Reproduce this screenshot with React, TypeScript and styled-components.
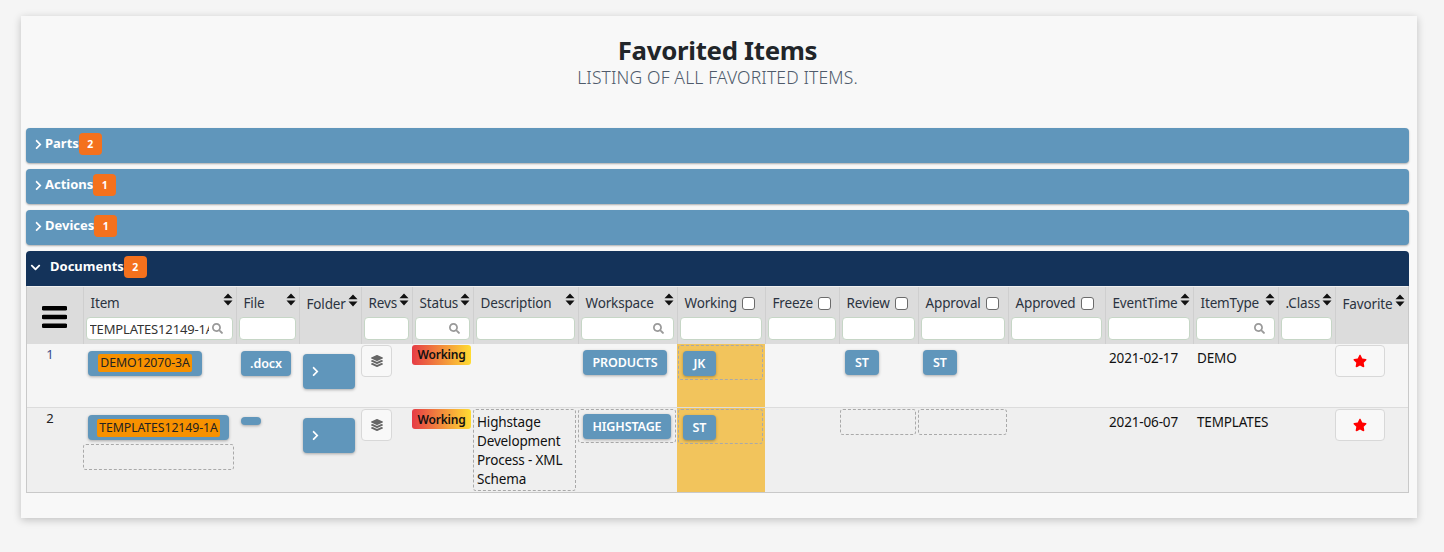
import React from 'react';
import styled, { createGlobalStyle } from 'styled-components';
import { FaStar, FaLayerGroup, FaSearch, FaChevronRight, FaChevronDown } from 'react-icons/fa';

const Global = createGlobalStyle`
  html, body { margin: 0; padding: 0; background: #f5f5f5; }
  body { font-family: "Noto Sans", "Open Sans", sans-serif; color: #212529; }
`;
const Page = styled.div`
  padding: 16px 27px 34px 21px;
  height: 552px;
  box-sizing: border-box;
`;
const Card = styled.div`
  background: #f8f8f8;
  height: 502px;
  box-sizing: border-box;
  padding: 19px 8px 0 5px;
  box-shadow: 0 2px 8px rgba(0,0,0,.22);
`;
const Title = styled.h1`
  margin: 0;
  text-align: center;
  font-size: 25.8px;
  line-height: 31px;
  font-weight: 700;
  color: #212529;
  letter-spacing: -0.3px;
`;
const Subtitle = styled.div`
  text-align: center;
  font-size: 17.5px;
  line-height: 22px;
  font-weight: 300;
  color: #4f5b6b;
  letter-spacing: 0.15px;
  margin-bottom: 40px;
`;
const Panel = styled.div<{ $open?: boolean }>`
  height: 35px;
  display: flex;
  align-items: center;
  box-sizing: border-box;
  padding-bottom: 3px;
  color: #fff;
  font-size: 13px;
  font-weight: 700;
  background: ${p => (p.$open ? '#14335a' : '#6096bb')};
  border-radius: ${p => (p.$open ? '4px 4px 0 0' : '4px')};
  box-shadow: ${p => (p.$open ? 'none' : '0 1px 2px rgba(0,0,0,.3)')};
  padding-left: ${p => (p.$open ? '4px' : '7px')};
  margin-bottom: ${p => (p.$open ? '0' : '6px')};
`;
const PanelLabel = styled.span<{ $open?: boolean }>`
  margin-left: ${p => (p.$open ? '9px' : '1px')};
  position: relative;
  top: -1px;
`;
const Count = styled.span`
  background: #f4711d;
  border-radius: 4px;
  width: 23px;
  height: 22px;
  display: inline-flex;
  align-items: center;
  justify-content: center;
  font-size: 10.5px;
  font-weight: 700;
`;
const TableFrame = styled.div`
  width: 1383px;
  border: 1px solid #c9c9c9;
  border-top: 0;
  box-sizing: border-box;
`;
const Table = styled.table`
  width: 1381px;
  border-collapse: collapse;
  table-layout: fixed;
  font-size: 13.5px;
  letter-spacing: -0.15px;
`;
const HeadCell = styled.th`
  background: #dcdcdc;
  height: 57px;
  padding: 0;
  box-sizing: border-box;
  border-left: 1px solid #cfcfcf;
  border-top: 1px solid #f0f0f0;
  vertical-align: top;
  font-weight: 400;
  color: #2b3340;
  text-align: left;
  &:first-child { border-left: 0; }
`;
const HeadTop = styled.div<{ $drop?: boolean }>`
  height: 30px;
  box-sizing: border-box;
  padding: ${p => (p.$drop ? '4px 3px 0 7px' : '2px 3px 0 7px')};
  display: flex;
  align-items: center;
  justify-content: space-between;
  white-space: nowrap;
`;
const Sort = styled.svg`
  width: 10px;
  height: 13px;
  flex: none;
  margin-top: -8px;
`;
const Check = styled.span`
  width: 11px;
  height: 11px;
  border: 1px solid #6b6b6b;
  border-radius: 3px;
  background: #fff;
  margin-left: 5px;
  flex: none;
`;
const Label = styled.span`
  flex: none;
`;
const HeadRow = styled.div`
  display: flex;
  align-items: center;
`;
const FilterWrap = styled.div`
  margin: 0 3px 0 2px;
  height: 23px;
  box-sizing: border-box;
  background: #fff;
  border: 1px solid #c6d6c6;
  border-radius: 4px;
  display: flex;
  align-items: center;
  padding: 0 3px;
  font-size: 13px;
  color: #333;
  overflow: hidden;
  white-space: nowrap;
`;
const FilterText = styled.span`
  flex: 1;
  overflow: hidden;
  min-width: 0;
`;
const Search = styled(FaSearch)`
  margin-left: auto;
  margin-right: 6px;
  flex: none;
  color: #9a9a9a;
  font-size: 11px;
`;
const ItemSearch = styled(Search)`
  margin-left: 3px;
  margin-right: 6px;
`;
const Menu = styled.svg`
  width: 25px;
  height: 23px;
  display: block;
  margin: 19px auto 0 15px;
`;
const Row = styled.tr<{ $alt?: boolean }>`
  background: ${p => (p.$alt ? '#efefef' : '#f5f5f5')};
  & > td { height: ${p => (p.$alt ? '84px' : '64px')}; border-top: ${p => (p.$alt ? '1px solid #dcdcdc' : '0')}; }
`;
const Cell = styled.td<{ $hot?: boolean; $pad?: string }>`
  padding: ${p => p.$pad || '1px 0 0 0'};
  box-sizing: border-box;
  vertical-align: top;
  color: #111;
  background: ${p => (p.$hot ? '#f2c45c' : 'transparent')};
`;
const Num = styled.div<{ $dark?: boolean }>`
  text-align: center;
  color: ${p => (p.$dark ? '#222' : '#3b4a8a')};
  font-size: 13px;
  padding-right: 10px;
`;
const Btn = styled.div<{ $w?: string; $h?: string; $ml?: string; $mt?: string }>`
  background: #6096bb;
  color: #fff;
  font-weight: 600;
  font-size: 12.5px;
  border-radius: 4px;
  box-shadow: 0 1px 3px rgba(0,0,0,.3);
  display: flex;
  align-items: center;
  justify-content: center;
  box-sizing: border-box;
  width: ${p => p.$w || 'auto'};
  height: ${p => p.$h || '25px'};
  margin-left: ${p => p.$ml || '0'};
  margin-top: ${p => p.$mt || '0'};
  letter-spacing: -0.1px;
`;
const Mark = styled.span`
  background: #f79100;
  color: #222;
  font-weight: 400;
  padding: 0 2px;
  border-radius: 2px;
  font-size: 12.3px;
  line-height: 18px;
`;
const FolderBtn = styled(Btn)`
  justify-content: flex-start;
  padding-left: 7px;
  font-size: 11px;
`;
const Dashed = styled.div<{ $w?: string; $h?: string; $ml?: string; $mt?: string; $pad?: string }>`
  border: 1px dashed #a9a9a9;
  border-radius: 3px;
  box-sizing: border-box;
  width: ${p => p.$w || 'auto'};
  height: ${p => p.$h || 'auto'};
  margin-left: ${p => p.$ml || '0'};
  margin-top: ${p => p.$mt || '0'};
  padding: ${p => p.$pad || '0'};
`;
const Square = styled.div<{ $w: string; $ml?: string }>`
  width: ${p => p.$w};
  height: 32px;
  border: 1px solid #d8d8d8;
  border-radius: 4px;
  background: #f8f8f8;
  box-sizing: border-box;
  display: flex;
  align-items: center;
  justify-content: center;
  margin-left: ${p => p.$ml || '0'};
`;
const Layers = styled(FaLayerGroup)`
  color: #666;
  font-size: 12px;
`;
const Red = styled(FaStar)`
  color: #f00;
  font-size: 14px;
`;
const Status = styled.div`
  width: 59px;
  height: 20px;
  border-radius: 3px;
  background: linear-gradient(90deg, #e63c46, #ffdc32);
  color: #111;
  font-weight: 600;
  font-size: 12px;
  display: flex;
  align-items: center;
  justify-content: center;
  letter-spacing: -0.2px;
`;
const Text = styled.div`
  padding: 4px 0 0 4px;
  white-space: nowrap;
`;
const Desc = styled.div`
  line-height: 19px;
`;

const SortIcon = () => (
  <Sort viewBox="0 0 10 13">
    <path d="M5 0.5 L9.5 5.2 H0.5 Z M5 12.5 L9.5 7.6 H0.5 Z" fill="#111" />
  </Sort>
);

type Col = { name: string; w: number; sort?: boolean; check?: boolean; search?: boolean; filter?: boolean; value?: string; drop?: boolean };
const cols: Col[] = [
  { name: 'Item', w: 153, sort: true, search: true, value: 'TEMPLATES12149-1A' },
  { name: 'File', w: 63, sort: true },
  { name: 'Folder', w: 62, sort: true, filter: false, drop: true },
  { name: 'Revs', w: 51, sort: true },
  { name: 'Status', w: 61, sort: true, search: true },
  { name: 'Description', w: 105, sort: true },
  { name: 'Workspace', w: 99, sort: true, search: true },
  { name: 'Working', w: 88, check: true },
  { name: 'Freeze', w: 74, check: true },
  { name: 'Review', w: 79, check: true },
  { name: 'Approval', w: 90, check: true },
  { name: 'Approved', w: 97, check: true },
  { name: 'EventTime', w: 88, sort: true },
  { name: 'ItemType', w: 85, sort: true, search: true },
  { name: '.Class', w: 57, sort: true },
  { name: 'Favorite', w: 73, sort: true, filter: false, drop: true },
];

const PanelRow = ({ label, n, open }: { label: string; n: number; open?: boolean }) => (
  <Panel $open={open}>
    {open ? <FaChevronDown size={11} /> : <FaChevronRight size={11} />}
    <PanelLabel $open={open}>{label}</PanelLabel>
    <Count>{n}</Count>
  </Panel>
);

export default function App() {
  return (
    <Page>
      <Global />
      <Card>
        <Title>Favorited Items</Title>
        <Subtitle>LISTING OF ALL FAVORITED ITEMS.</Subtitle>
        <PanelRow label="Parts" n={2} />
        <PanelRow label="Actions" n={1} />
        <PanelRow label="Devices" n={1} />
        <PanelRow label="Documents" n={2} open />
        <TableFrame>
          <Table>
            <colgroup>
              <col style={{ width: 56 }} />
              {cols.map(c => <col key={c.name} style={{ width: c.w }} />)}
            </colgroup>
            <thead>
              <tr>
                <HeadCell>
                  <Menu viewBox="0 0 25 23">
                    <path d="M1.5 2.2h22M1.5 11h22M1.5 19.8h22" stroke="#000" strokeWidth="4.4" strokeLinecap="round" />
                  </Menu>
                </HeadCell>
                {cols.map(c => (
                  <HeadCell key={c.name}>
                    <HeadTop $drop={c.drop}>
                      {c.check ? (
                        <HeadRow><Label>{c.name}</Label><Check /></HeadRow>
                      ) : (
                        <><Label>{c.name}</Label>{c.sort && <SortIcon />}</>
                      )}
                    </HeadTop>
                    {c.filter !== false && (
                      <FilterWrap>
                        {c.value && <FilterText>{c.value}</FilterText>}
                        {c.search && (c.value ? <ItemSearch /> : <Search />)}
                      </FilterWrap>
                    )}
                  </HeadCell>
                ))}
              </tr>
            </thead>
            <tbody>
              <Row>
                <Cell><Num>1</Num></Cell>
                <Cell $pad="7px 0 0 0"><Btn $w="114px" $ml="5px"><Mark>DEMO12070-3A</Mark></Btn></Cell>
                <Cell $pad="7px 0 0 0"><Btn $w="50px" $ml="5px">.docx</Btn></Cell>
                <Cell $pad="10px 0 0 0"><FolderBtn $w="52px" $h="35px" $ml="4px"><FaChevronRight size={11} /></FolderBtn></Cell>
                <Cell><Square $w="31px"><Layers /></Square></Cell>
                <Cell><Status>Working</Status></Cell>
                <Cell />
                <Cell $pad="6px 0 0 0"><Btn $w="84px" $ml="5px">PRODUCTS</Btn></Cell>
                <Cell $hot><Dashed $w="85px" $h="35px" $ml="1px" $pad="5px 0 0 4px"><Btn $w="33px">JK</Btn></Dashed></Cell>
                <Cell />
                <Cell $pad="6px 0 0 0"><Btn $w="34px" $ml="6px">ST</Btn></Cell>
                <Cell $pad="6px 0 0 0"><Btn $w="34px" $ml="5px">ST</Btn></Cell>
                <Cell />
                <Cell><Text>2021-02-17</Text></Cell>
                <Cell><Text>DEMO</Text></Cell>
                <Cell />
                <Cell><Square $w="50px"><Red /></Square></Cell>
              </Row>
              <Row $alt>
                <Cell><Num $dark>2</Num></Cell>
                <Cell $pad="7px 0 0 0">
                  <Btn $w="141px" $ml="5px"><Mark>TEMPLATES12149-1A</Mark></Btn>
                  <Dashed $w="151px" $h="26px" $mt="4px" />
                </Cell>
                <Cell $pad="9px 0 0 0"><Btn $w="20px" $h="8px" $ml="5px" /></Cell>
                <Cell $pad="10px 0 0 0"><FolderBtn $w="52px" $h="35px" $ml="4px"><FaChevronRight size={11} /></FolderBtn></Cell>
                <Cell><Square $w="31px"><Layers /></Square></Cell>
                <Cell><Status>Working</Status></Cell>
                <Cell $pad="1px 0 0 0"><Dashed $w="103px" $h="82px" $pad="3px 0 0 3px"><Desc>Highstage Development Process - XML Schema</Desc></Dashed></Cell>
                <Cell $pad="1px 0 0 0"><Dashed $w="98px" $h="34px" $pad="4px 0 0 4px"><Btn $w="88px">HIGHSTAGE</Btn></Dashed></Cell>
                <Cell $hot><Dashed $w="85px" $h="35px" $ml="1px" $pad="5px 0 0 4px"><Btn $w="33px">ST</Btn></Dashed></Cell>
                <Cell />
                <Cell $pad="1px 0 0 0"><Dashed $w="76px" $h="26px" $ml="1px" /></Cell>
                <Cell $pad="1px 0 0 0"><Dashed $w="89px" $h="26px" /></Cell>
                <Cell />
                <Cell><Text>2021-06-07</Text></Cell>
                <Cell><Text>TEMPLATES</Text></Cell>
                <Cell />
                <Cell><Square $w="50px"><Red /></Square></Cell>
              </Row>
            </tbody>
          </Table>
        </TableFrame>
      </Card>
    </Page>
  );
}
